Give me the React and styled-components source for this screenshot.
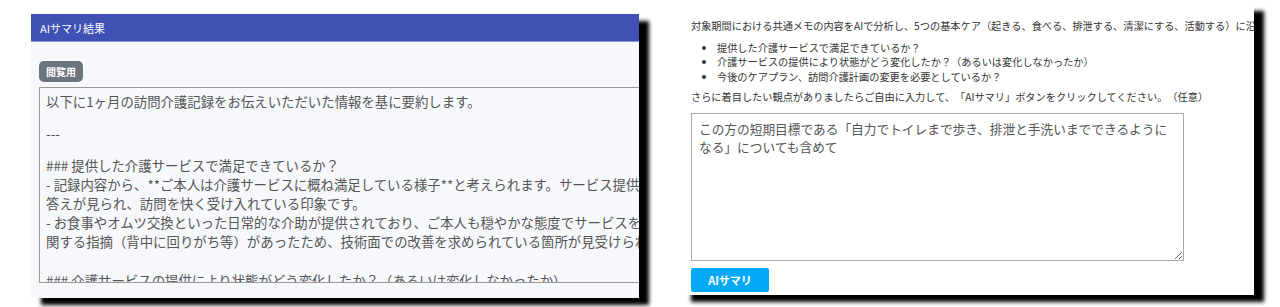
import React from "react";
import styled, { createGlobalStyle } from "styled-components";

const GlobalStyle = createGlobalStyle`
  html, body {
    margin: 0;
    padding: 0;
    background: #ffffff;
  }
  body {
    font-family: "Noto Sans CJK JP", "Noto Sans", sans-serif;
    text-spacing-trim: space-all;
  }
`;

const Stage = styled.div`
  display: flex;
  align-items: flex-start;
  height: 307px;
  overflow: hidden;
  padding-left: 31px;
  gap: 42px;
`;

const Shot = styled.section`
  flex: none;
  width: ${(p) => p.$w}px;
  height: ${(p) => p.$h}px;
  margin-top: ${(p) => p.$top}px;
  background: ${(p) => p.$bg};
  box-shadow: 10px 7px 4px #000;
  overflow: hidden;
  display: flex;
  flex-direction: column;
`;

const Header = styled.div`
  box-sizing: border-box;
  height: 28px;
  background: #3f51b5;
  color: #ffffff;
  font-size: 11px;
  display: flex;
  align-items: center;
  padding-left: 9px;
  border-bottom: 1px solid #8f9bd6;
`;

const ResultBody = styled.div`
  padding: 19px 0 0 8px;
  display: flex;
  flex-direction: column;
  align-items: flex-start;
  gap: 5px;
`;

const Badge = styled.span`
  background: #6c757d;
  color: #ffffff;
  font-size: 10px;
  font-weight: 700;
  border-radius: 5px;
  padding: 4px 7px;
  line-height: 13px;
`;

const ResultBox = styled.div`
  width: 760px;
  height: 196px;
  box-sizing: border-box;
  padding: 4px 6px;
  border: 1px solid #9a9a9a;
  background: #f7f8fc;
  color: #555555;
  font-size: 13.4px;
  line-height: 19px;
  overflow: hidden;
  white-space: pre;
`;

const ResultLine = styled.div`
  height: ${(p) => (p.$gap ? `${p.$gap}px` : "19px")};
`;

const FormBody = styled.div`
  padding: 15px 0 0 10px;
  display: flex;
  flex-direction: column;
  align-items: flex-start;
  color: #333333;
  font-size: 10.2px;
  line-height: 14.5px;
`;

const Intro = styled.p`
  margin: 0;
  white-space: nowrap;
`;

const Points = styled.ul`
  margin: 7px 0 6px;
  padding-left: 26px;
  white-space: nowrap;
  li {
    margin: 0;
  }
`;

const PromptArea = styled.textarea`
  width: 493px;
  height: 148px;
  box-sizing: border-box;
  margin: 8px 0 0;
  padding: 6px 7px;
  border: 1px solid #a9a9a9;
  background: #ffffff;
  color: #555555;
  font-family: "Noto Sans CJK JP", sans-serif;
  font-size: 12.7px;
  line-height: 18px;
  resize: vertical;
  outline: none;
`;

const SummaryButton = styled.button`
  margin-top: 7px;
  width: 78px;
  height: 24px;
  border: none;
  border-radius: 2px;
  background: #03a9f4;
  color: #ffffff;
  font-family: "Noto Sans CJK JP", sans-serif;
  font-size: 11px;
  font-weight: 700;
  cursor: pointer;
`;

const resultLines = [
  { text: "以下に1ヶ月の訪問介護記録をお伝えいただいた情報を基に要約します。" },
  { gap: 13 },
  { text: "---" },
  { gap: 13 },
  { text: "### 提供した介護サービスで満足できているか？" },
  {
    text: "- 記録内容から、**ご本人は介護サービスに概ね満足している様子**と考えられます。サービス提供時の声かけにも穏やかな",
  },
  { text: "答えが見られ、訪問を快く受け入れている印象です。" },
  {
    text: "- お食事やオムツ交換といった日常的な介助が提供されており、ご本人も穏やかな態度でサービスを受けています。ただし、介助方法に",
  },
  { text: "関する指摘（背中に回りがち等）があったため、技術面での改善を求められている箇所が見受けられます。" },
  { gap: 20 },
  { text: "### 介護サービスの提供により状態がどう変化したか？（あるいは変化しなかったか）" },
];

const promptText =
  "この方の短期目標である「自力でトイレまで歩き、排泄と手洗いまでできるようになる」についても含めて";

export default function App() {
  return (
    <>
      <GlobalStyle />
      <Stage>
        <Shot $w={608} $h={284} $top={14} $bg="#f7f8fc">
          <Header>AIサマリ結果</Header>
          <ResultBody>
            <Badge>閲覧用</Badge>
            <ResultBox>
              {resultLines.map((line, i) => (
                <ResultLine key={i} $gap={line.gap}>
                  {line.text}
                </ResultLine>
              ))}
            </ResultBox>
          </ResultBody>
        </Shot>
        <Shot $w={573} $h={291} $top={4} $bg="#ffffff">
          <FormBody>
            <Intro>
              対象期間における共通メモの内容をAIで分析し、5つの基本ケア（起きる、食べる、排泄する、清潔にする、活動する）に沿って要約します。
            </Intro>
            <Points>
              <li>提供した介護サービスで満足できているか？</li>
              <li>介護サービスの提供により状態がどう変化したか？（あるいは変化しなかったか）</li>
              <li>今後のケアプラン、訪問介護計画の変更を必要としているか？</li>
            </Points>
            <Intro>
              さらに着目したい観点がありましたらご自由に入力して、「AIサマリ」ボタンをクリックしてください。（任意）
            </Intro>
            <PromptArea defaultValue={promptText} />
            <SummaryButton>AIサマリ</SummaryButton>
          </FormBody>
        </Shot>
      </Stage>
    </>
  );
}
